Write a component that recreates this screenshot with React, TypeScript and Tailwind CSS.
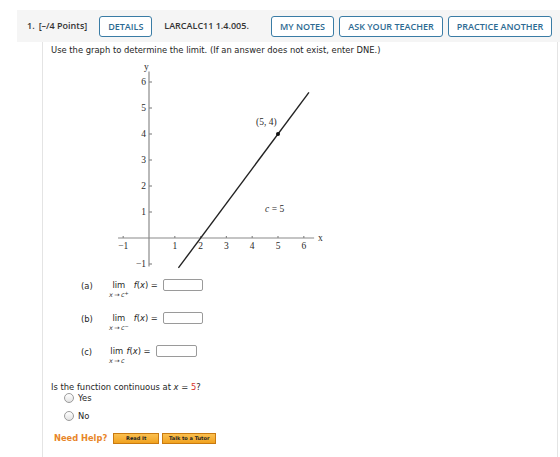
import React from "react";

const UX = 25.8;
const UY = 26;
const OX = 40;
const OY = 180;

const px = (x: number) => OX + x * UX;
const py = (y: number) => OY - y * UY;

function Graph() {
  const xs = [-1, 1, 2, 3, 4, 5, 6];
  const ys = [-1, 1, 2, 3, 4, 5, 6];
  return (
    <svg width="220" height="212" viewBox="0 0 220 212" className="block">
      <g stroke="#8a8a8a" strokeWidth="1.2">
        <line x1={px(-1.2)} y1={OY} x2={px(6.4)} y2={OY} />
        <line x1={OX} y1={py(-1.1)} x2={OX} y2={py(6.4)} />
        {xs.map((x) => (
          <line key={`tx${x}`} x1={px(x)} y1={OY - 2} x2={px(x)} y2={OY} />
        ))}
        {ys.map((y) => (
          <line key={`ty${y}`} x1={OX} y1={py(y)} x2={OX + 3} y2={py(y)} />
        ))}
      </g>
      <g fill="#2a2a2a" fontFamily="'Liberation Serif', serif" fontSize="9.5">
        {xs.map((x) => (
          <text key={`lx${x}`} x={px(x)} y={OY + 11} textAnchor="middle">
            {x === -1 ? "\u22121" : x}
          </text>
        ))}
        {ys.map((y) => (
          <text key={`ly${y}`} x={OX - 3} y={py(y) + 3} textAnchor="end">
            {y === -1 ? "\u22121" : y}
          </text>
        ))}
        <text x={px(6.4) + 4} y={OY + 3}>x</text>
        <text x={OX - 5} y={py(6.4) - 2}>y</text>
        <text x={px(4.15)} y={py(4.35)}>(5, 4)</text>
        <text x={px(4.5)} y={py(1)}>
          <tspan fontStyle="italic">c</tspan> = 5
        </text>
      </g>
      <line
        x1={px(1.14)}
        y1={py(-1.15)}
        x2={px(6.2)}
        y2={py(5.6)}
        stroke="#222"
        strokeWidth="1.4"
      />
      <circle cx={px(5)} cy={py(4)} r="2" fill="#111" />
    </svg>
  );
}

function HeaderButton({ label, w }: { label: string; w: number }) {
  return (
    <button
      className="h-[21px] shrink-0 whitespace-nowrap rounded-[3px] border border-[#3a7ca5] bg-white text-center text-[9px] font-semibold leading-none text-[#2d6a92]"
      style={{ width: w }}
    >
      {label}
    </button>
  );
}

function AnswerBox({ w = 40 }: { w?: number }) {
  return (
    <span
      className="inline-block h-[12px] rounded-[2px] border border-[#9a9a9a] bg-white"
      style={{ width: w }}
    />
  );
}

function LimitRow({
  tag,
  sup,
  gap,
}: {
  tag: string;
  sup?: string;
  gap: number;
}) {
  return (
    <div className="flex items-start">
      <span className="w-[28px] pt-[1px]">{tag}</span>
      <div className="flex flex-col items-center" style={{ marginRight: gap }}>
        <span className="leading-[12px]">lim</span>
        <span className="text-[6.5px] leading-[8px] text-[#333]">
          <i>x</i>
          {"\u2009\u2192\u2009"}
          <i>c</i>
          {sup && <sup className="text-[5px]">{sup}</sup>}
        </span>
      </div>
      <span className="leading-[12px]">
        <i>f</i>(<i>x</i>) =
      </span>
      <span className="ml-[5px]">
        <AnswerBox w={sup ? 40 : 41} />
      </span>
    </div>
  );
}

function Radio({ label }: { label: string }) {
  return (
    <label className="flex items-center gap-[4px]">
      <span className="inline-block h-[10px] w-[10px] rounded-full border border-[#9b9b9b] bg-gradient-to-b from-white to-[#e3e3e3]" />
      <span>{label}</span>
    </label>
  );
}

export default function App() {
  return (
    <div className="min-h-[457px] bg-white pl-[17px] pt-[10px] text-[#1e1e1e] [font-family:'DejaVu_Sans',Verdana,sans-serif]">
      <div className="flex h-[32px] items-center whitespace-nowrap bg-[#f5f5f5] pl-[10px] text-[9px] font-semibold text-[#333] [font-family:'Open_Sans',sans-serif]">
        <span>1.</span>
        <span className="ml-[4px]">[–/4 Points]</span>
        <div className="ml-[12px]">
          <HeaderButton label="DETAILS" w={53} />
        </div>
        <span className="ml-[12px]">LARCALC11 1.4.005.</span>
        <div className="ml-auto flex gap-[5px] pr-[8px]">
          <HeaderButton label="MY NOTES" w={63} />
          <HeaderButton label="ASK YOUR TEACHER" w={104} />
          <HeaderButton label="PRACTICE ANOTHER" w={104} />
        </div>
      </div>

      <div className="ml-[25px] mr-[2px] min-h-[415px] border-l border-r border-[#e4e4e4] pl-[8px] text-[8.4px]">
        <p className="pt-[2px] leading-[12px]">
          Use the graph to determine the limit. (If an answer does not exist,
          enter DNE.)
        </p>

        <div className="ml-[58px] mt-[2px]">
          <Graph />
        </div>

        <div className="ml-[30px] mt-[9px] flex flex-col gap-[13px]">
          <LimitRow tag="(a)" sup="+" gap={5} />
          <LimitRow tag="(b)" sup={"\u2212"} gap={5} />
          <LimitRow tag="(c)" gap={2} />
        </div>

        <p className="mt-[16px] leading-[12px]">
          Is the function continuous at <i>x</i> ={" "}
          <span className="text-[#d9322b]">5</span>?
        </p>
        <div className="ml-[13px] mt-[-1px] flex flex-col gap-[5px]">
          <Radio label="Yes" />
          <Radio label="No" />
        </div>

        <div className="mt-[10px] flex items-center gap-[3px] pl-[3px]">
          <span className="mr-[3px] text-[8.3px] font-bold text-[#e8862a]">
            Need Help?
          </span>
          <button className="h-[11px] w-[46px] border border-[#c97a10] bg-gradient-to-b from-[#fbc04f] to-[#f0a21c] text-[5px] font-bold leading-none text-[#222]">
            Read It
          </button>
          <button className="h-[11px] w-[54px] border border-[#c97a10] bg-gradient-to-b from-[#fbc04f] to-[#f0a21c] text-[5px] font-bold leading-none text-[#222]">
            Talk to a Tutor
          </button>
        </div>
      </div>
    </div>
  );
}
